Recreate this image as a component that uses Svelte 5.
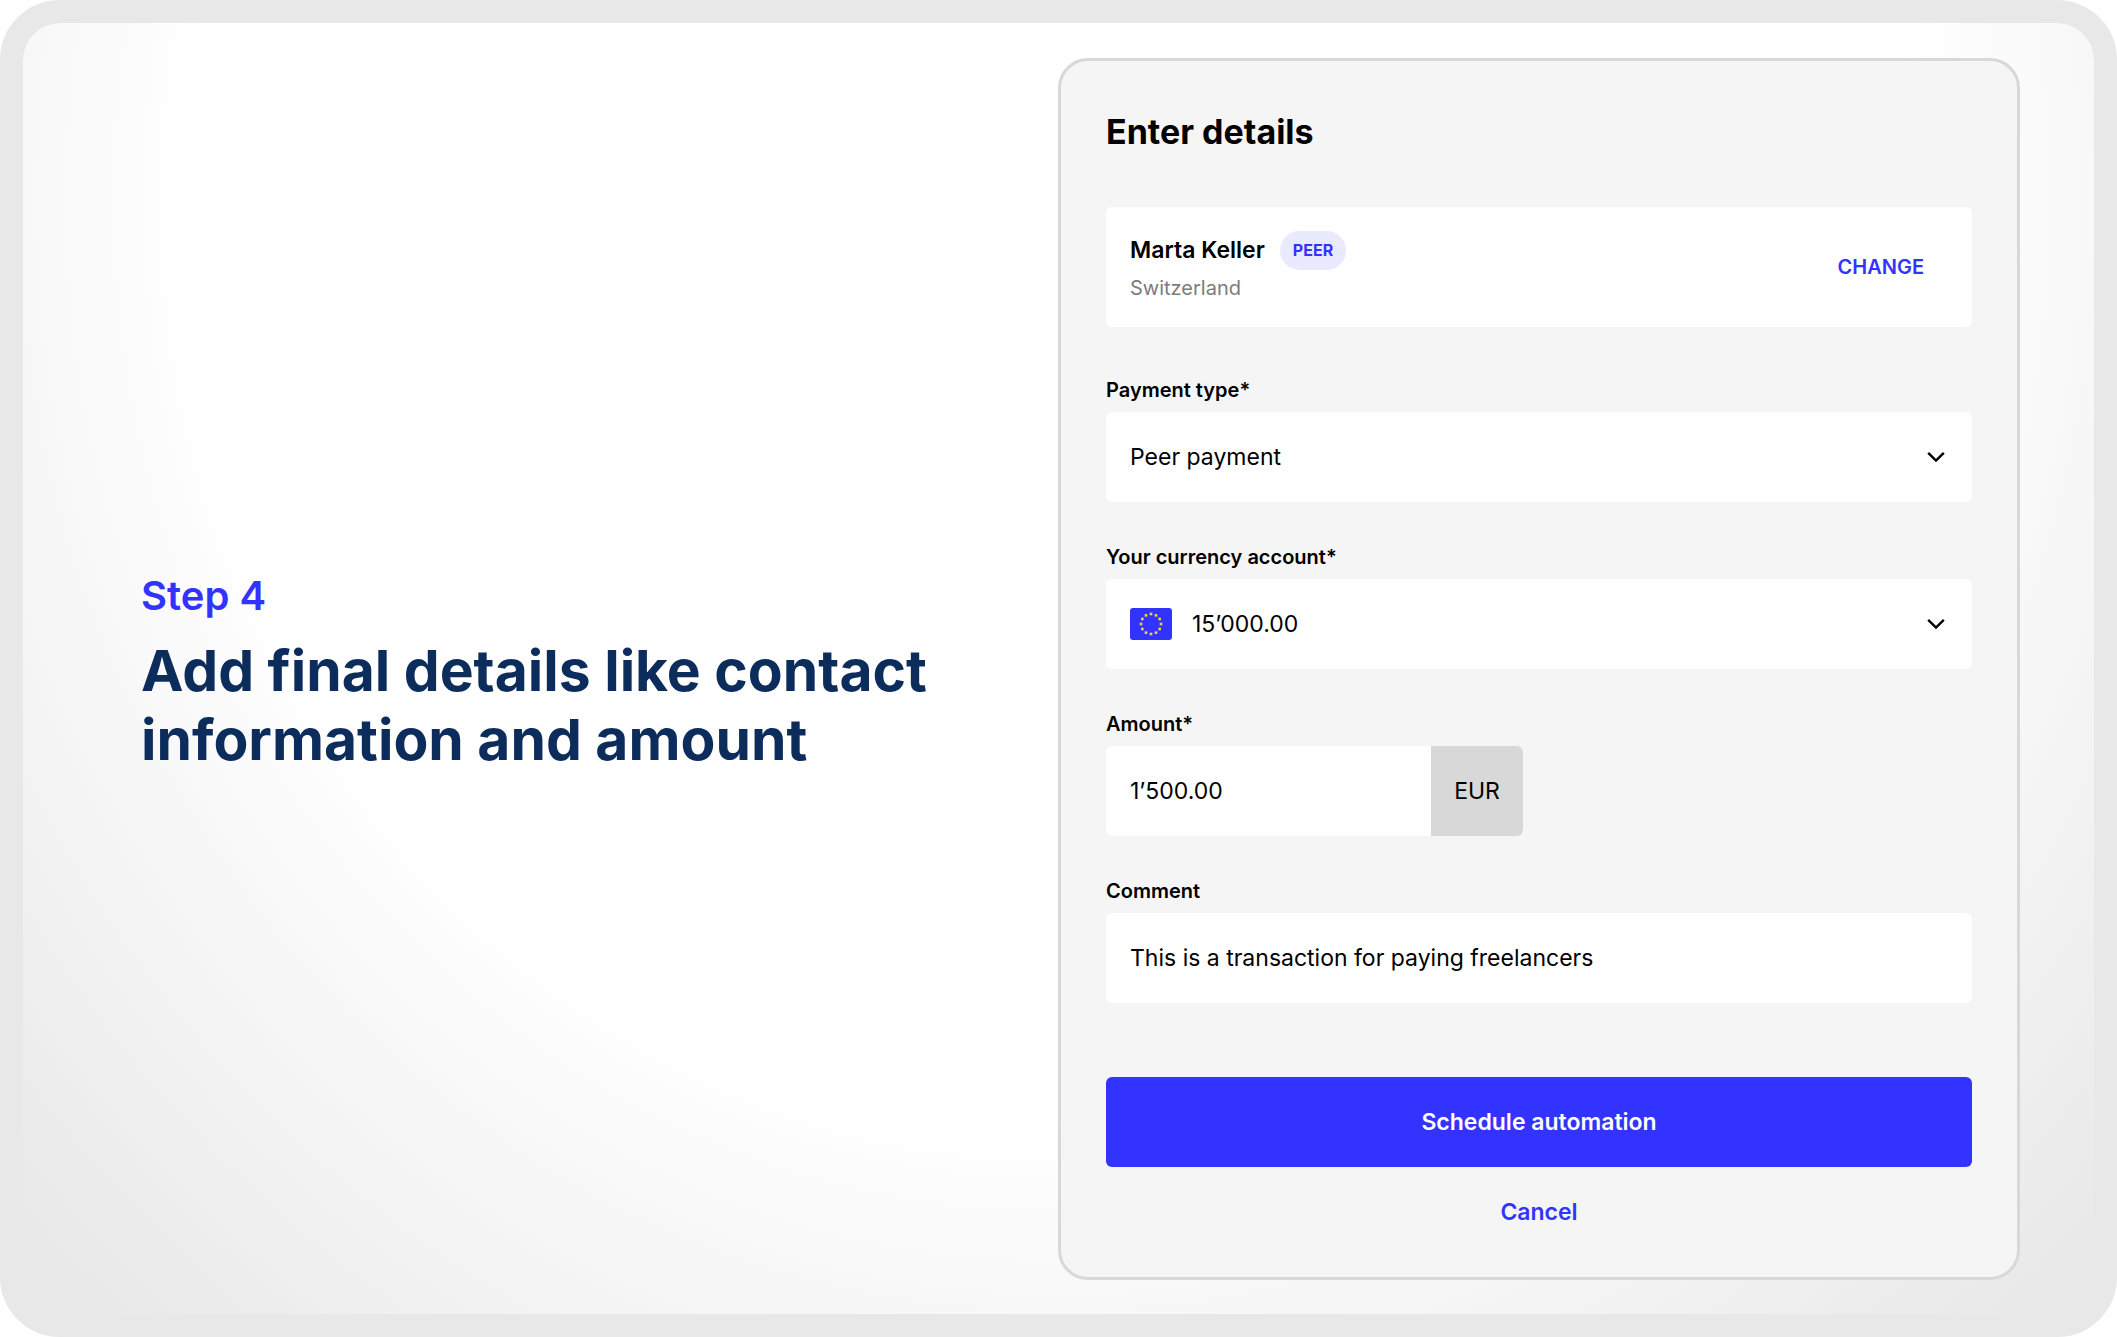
<script lang="ts">
    let paymentType: string = "peer";
    let account: string = "eur";
    let amount: string = "1’500.00";
    let comment: string = "This is a transaction for paying freelancers";

    // The twelve stars of the flag, evenly spread on a circle
    const stars = Array.from({ length: 12 }, (_, i) => {
        const angle = (i * Math.PI) / 6;
        return { x: 21 + 10 * Math.sin(angle), y: 16 - 10 * Math.cos(angle) };
    });
</script>

<main class="frame">
    <section class="intro">
        <p class="step">Step 4</p>
        <h1>Add final details like contact information and amount</h1>
    </section>

    <form class="panel" on:submit|preventDefault>
        <h2>Enter details</h2>

        <div class="person">
            <div>
                <div class="person-name">
                    <strong>Marta Keller</strong>
                    <span class="badge">PEER</span>
                </div>
                <p class="country">Switzerland</p>
            </div>
            <button type="button" class="change">CHANGE</button>
        </div>

        <div class="field">
            <label for="payment-type">Payment type*</label>
            <div class="control">
                <select id="payment-type" bind:value={paymentType}>
                    <option value="peer">Peer payment</option>
                </select>
                <svg class="chevron" viewBox="0 0 18 12" aria-hidden="true">
                    <path d="M1.2 1.8 L9 9.6 L16.8 1.8" />
                </svg>
            </div>
        </div>

        <div class="field">
            <label for="account">Your currency account*</label>
            <div class="control">
                <svg class="flag" viewBox="0 0 42 32" aria-hidden="true">
                    <rect width="42" height="32" rx="3" fill="#3333ff" />
                    {#each stars as star}
                        <rect x={star.x - 1.3} y={star.y - 1.3} width="2.6" height="2.6" fill="#f5cf3d" />
                    {/each}
                </svg>
                <select id="account" bind:value={account}>
                    <option value="eur">15’000.00</option>
                </select>
                <svg class="chevron" viewBox="0 0 18 12" aria-hidden="true">
                    <path d="M1.2 1.8 L9 9.6 L16.8 1.8" />
                </svg>
            </div>
        </div>

        <div class="field">
            <label for="amount">Amount*</label>
            <div class="control amount">
                <input id="amount" type="text" bind:value={amount} />
                <span class="unit">EUR</span>
            </div>
        </div>

        <div class="field">
            <label for="comment">Comment</label>
            <div class="control">
                <input id="comment" type="text" bind:value={comment} />
            </div>
        </div>

        <div class="actions">
            <button type="submit" class="primary">Schedule automation</button>
            <button type="button" class="cancel">Cancel</button>
        </div>
    </form>
</main>

<style>
    :global(body) {
        margin: 0;
        background-color: #ffffff;
        color: #000000;
        font-family: Inter, "Open Sans", sans-serif;
    }

    .frame {
        box-sizing: border-box;
        min-height: 100vh;
        display: grid;
        grid-template-columns: 1035fr 962fr;
        align-items: center;
        padding: 34px 74px 33px 0;
        border: 23px solid #e8e8e8;
        border-radius: 60px;
        background: radial-gradient(69% 118% at 50% 14%, #ffffff 60%, #e8e8e8 100%) padding-box, #e8e8e8;
    }

    h1,
    h2,
    p {
        margin: 0;
    }

    /* Intro text */
    .intro {
        padding: 8px 80px 0 118px;
    }

    .step {
        color: #3333ff;
        font-size: 40px;
        font-weight: 600;
        line-height: 48px;
        margin-bottom: 16px;
    }

    h1 {
        color: #0c2c5c;
        font-size: 57px;
        font-weight: 700;
        line-height: 69px;
    }

    /* Form panel */
    .panel {
        box-sizing: border-box;
        padding: 47px 45px 50px;
        border: 3px solid #d8d8d8;
        border-radius: 30px;
        background-color: #f5f5f5;
    }

    h2 {
        font-size: 34px;
        font-weight: 700;
        line-height: 48px;
        margin-bottom: 51px;
    }

    .person {
        box-sizing: border-box;
        height: 120px;
        display: flex;
        justify-content: space-between;
        align-items: center;
        padding: 0 48px 0 24px;
        border-radius: 6px;
        background-color: #ffffff;
        margin-bottom: 48px;
    }

    .person-name {
        display: flex;
        align-items: center;
        gap: 15px;
        font-size: 23px;
    }

    .person-name strong {
        font-weight: 600;
    }

    .badge {
        padding: 0 13px;
        border-radius: 20px;
        background-color: #eaeaff;
        color: #3333ff;
        font-size: 16px;
        font-weight: 700;
        line-height: 39px;
    }

    .country {
        color: #7c7c7c;
        font-size: 20px;
        line-height: 24px;
        margin: 6px 0 4px;
    }

    button {
        border: none;
        padding: 0;
        background: none;
        color: #3333ff;
        font-family: inherit;
        font-weight: 600;
        cursor: pointer;
    }

    .change {
        font-size: 20px;
    }

    .field {
        margin-bottom: 40px;
    }

    label {
        display: block;
        font-size: 20px;
        font-weight: 600;
        line-height: 30px;
        margin-bottom: 7px;
    }

    .control {
        box-sizing: border-box;
        height: 90px;
        display: flex;
        align-items: center;
        padding: 0 24px;
        border-radius: 6px;
        background-color: #ffffff;
    }

    select,
    input {
        flex: 1;
        min-width: 0;
        height: 100%;
        padding: 0;
        border: none;
        outline: none;
        appearance: none;
        background: none;
        color: #000000;
        font-family: inherit;
        font-size: 23px;
    }

    .chevron {
        width: 18px;
        height: 12px;
        margin-right: 3px;
        fill: none;
        stroke: #000000;
        stroke-width: 2.4;
    }

    .flag {
        width: 42px;
        height: 32px;
        margin-right: 20px;
    }

    .amount {
        width: 417px;
        padding-right: 0;
        overflow: hidden;
    }

    .unit {
        width: 92px;
        background-color: #d8d8d8;
        font-size: 23px;
        line-height: 90px;
        text-align: center;
    }

    .actions {
        display: flex;
        flex-direction: column;
        align-items: center;
        gap: 30px;
        padding-top: 34px;
    }

    .primary {
        width: 100%;
        height: 90px;
        border-radius: 6px;
        background-color: #3333ff;
        color: #ffffff;
        font-size: 23px;
    }

    .cancel {
        font-size: 23px;
        line-height: 30px;
    }
</style>
